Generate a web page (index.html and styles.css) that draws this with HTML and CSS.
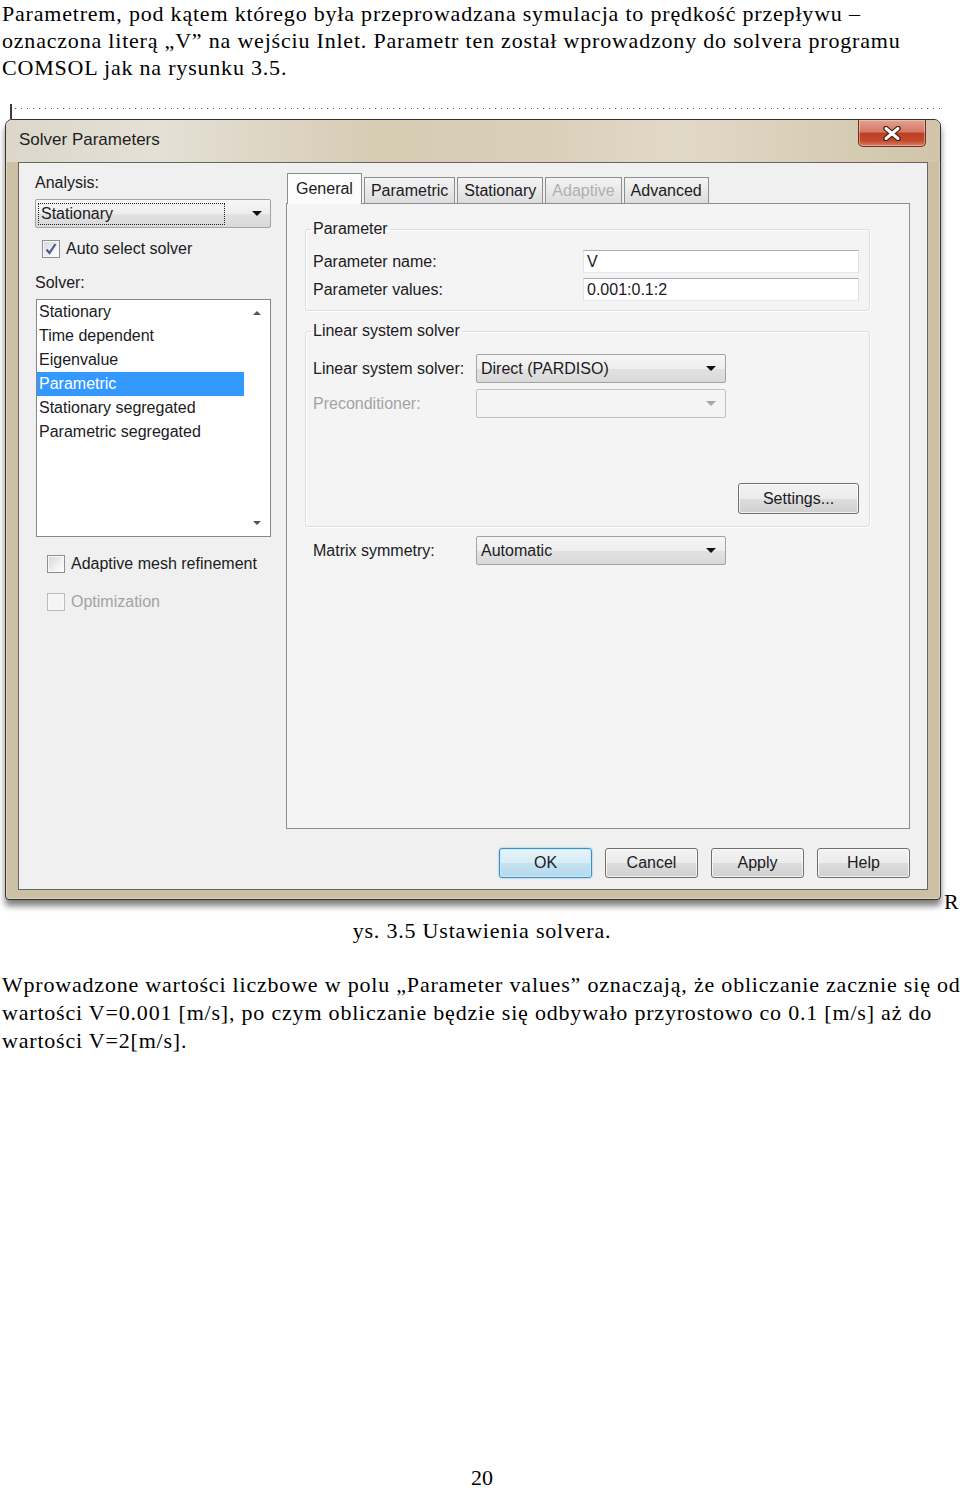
FILE: index.html
```html
<!DOCTYPE html>
<html lang="pl">
<head>
    <meta charset="UTF-8">
    <meta name="viewport" content="width=device-width, initial-scale=1.0">
    <title>Rys. 3.5 Ustawienia solvera</title>
    <link rel="stylesheet" href="styles.css">
</head>
<body>
<div class="page">
    <p class="text">Parametrem, pod kątem którego była przeprowadzana symulacja to prędkość przepływu –<br>oznaczona literą „V” na wejściu Inlet. Parametr ten został wprowadzony do solvera programu<br>COMSOL jak na rysunku 3.5.</p>

    <div class="figure">
        <div class="shot">
            <div class="shot-edge"></div>
            <div class="window">
                <div class="titlebar">
                    <span class="title">Solver Parameters</span>
                    <button class="close" type="button">
                        <svg width="22" height="15" viewBox="0 0 22 15">
                            <path d="M5 2.5 L17 12.5 M17 2.5 L5 12.5" stroke="#4b1d15" stroke-width="5.5" stroke-linecap="round"/>
                            <path d="M5 2.5 L17 12.5 M17 2.5 L5 12.5" stroke="#ffffff" stroke-width="3" stroke-linecap="round"/>
                        </svg>
                    </button>
                </div>

                <div class="client">
                    <div class="left">
                        <div class="label">Analysis:</div>
                        <div class="combo analysis">
                            <span class="focus-rect">Stationary</span>
                            <span class="arrow"></span>
                        </div>
                        <div class="check auto">
                            <span class="box">
                                <svg width="16" height="16" viewBox="0 0 16 16"><path d="M3.5 8.5 L6.5 12 L12.5 3" fill="none" stroke="#4a5a96" stroke-width="2.2"/></svg>
                            </span>
                            Auto select solver
                        </div>
                        <div class="label solver-label">Solver:</div>
                        <div class="listbox">
                            <ul class="items">
                                <li>Stationary</li>
                                <li>Time dependent</li>
                                <li>Eigenvalue</li>
                                <li class="selected">Parametric</li>
                                <li>Stationary segregated</li>
                                <li>Parametric segregated</li>
                            </ul>
                            <div class="scroll">
                                <span class="scroll-up"></span>
                                <span class="scroll-down"></span>
                            </div>
                        </div>
                        <div class="check adaptive">
                            <span class="box"></span>
                            Adaptive mesh refinement
                        </div>
                        <div class="check optimization disabled">
                            <span class="box"></span>
                            Optimization
                        </div>
                    </div>

                    <div class="right">
                        <div class="tabs">
                            <div class="tab active">General</div>
                            <div class="tab">Parametric</div>
                            <div class="tab">Stationary</div>
                            <div class="tab disabled">Adaptive</div>
                            <div class="tab">Advanced</div>
                        </div>
                        <div class="panel">
                            <fieldset class="group params">
                                <legend>Parameter</legend>
                                <div class="field">
                                    <span>Parameter name:</span>
                                    <div class="input">V</div>
                                </div>
                                <div class="field">
                                    <span>Parameter values:</span>
                                    <div class="input">0.001:0.1:2</div>
                                </div>
                            </fieldset>

                            <fieldset class="group linear">
                                <legend>Linear system solver</legend>
                                <div class="field">
                                    <span>Linear system solver:</span>
                                    <div class="combo"><span class="combo-text">Direct (PARDISO)</span><span class="arrow"></span></div>
                                </div>
                                <div class="field disabled">
                                    <span>Preconditioner:</span>
                                    <div class="combo"><span class="combo-text"></span><span class="arrow"></span></div>
                                </div>
                                <div class="settings-row">
                                    <button class="btn settings" type="button">Settings...</button>
                                </div>
                            </fieldset>

                            <div class="field symmetry">
                                <span>Matrix symmetry:</span>
                                <div class="combo"><span class="combo-text">Automatic</span><span class="arrow"></span></div>
                            </div>
                        </div>
                    </div>

                    <div class="buttons">
                        <button class="btn default" type="button">OK</button>
                        <button class="btn" type="button">Cancel</button>
                        <button class="btn" type="button">Apply</button>
                        <button class="btn" type="button">Help</button>
                    </div>
                </div>
            </div>
        </div>
        <span class="fig-r">R</span>
    </div>
    <p class="caption">ys. 3.5 Ustawienia solvera.</p>

    <p class="text para2">Wprowadzone wartości liczbowe w polu „Parameter values” oznaczają, że obliczanie zacznie się od<br>wartości V=0.001 [m/s], po czym obliczanie będzie się odbywało przyrostowo co 0.1 [m/s] aż do<br>wartości V=2[m/s].</p>

    <div class="page-num">20</div>
</div>
</body>
</html>
```

FILE: styles.css
```css
body {
    margin: 0;
    background-color: white;
    color: black;
    font-family: "Liberation Serif", "Times New Roman", serif;
    font-size: 22px;
}
.page {
    min-height: 1488px;
    display: flex;
    flex-direction: column;
}
.text {
    margin: 0;
    padding-left: 2px;
    line-height: 27px;
    letter-spacing: 0.8px;
    white-space: nowrap;
}
.para2 {
    margin-top: 26px;
    line-height: 28px;
}
.caption {
    margin: 7px 0 0;
    padding-left: 4px;
    text-align: center;
    line-height: 28px;
    letter-spacing: 0.8px;
}
.page-num {
    margin-top: auto;
    padding-left: 4px;
    text-align: center;
    line-height: 21px;
}

/* screenshot of the dialog */
.figure {
    display: flex;
    align-items: flex-end;
    margin-top: 23px;
}
.fig-r {
    margin-left: 3px;
    line-height: 16px;
}
.shot {
    width: 936px;
    margin-left: 5px;
    padding-bottom: 10px;
}
.shot-edge {
    height: 15px;
    margin: 0 1px 0 5px;
    border-left: 2px solid #3a3a3a;
    background-image: linear-gradient(to right, #555 1px, transparent 1px);
    background-size: 6px 1px;
    background-position: 3px 4px;
    background-repeat: repeat-x;
}
.window {
    border: 1px solid #333;
    border-radius: 7px 7px 4px 4px;
    background-color: #cbc0a4;
    padding: 0 12px 9px;
    box-shadow: 0 6px 6px rgba(0,0,0,0.5), inset 0 0 0 1px rgba(255,255,255,0.35);
    font-family: "Liberation Sans", Arial, sans-serif;
    font-size: 16px;
    color: #201a22;
}
.titlebar {
    display: flex;
    justify-content: space-between;
    align-items: flex-start;
    height: 42px;
    margin: 0 -12px;
    padding: 0 14px 0 13px;
    border-radius: 6px 6px 0 0;
    background: linear-gradient(to right, #dcd7ca, #e5e0d6 16%, #d6ccb4 40%, #dad0ba 58%, #e1d9c7 72%, #d0c5aa 100%);
}
.title {
    padding-top: 10px;
    line-height: 20px;
    font-size: 17px;
    color: #1e1e1e;
}
.close {
    display: flex;
    align-items: center;
    justify-content: center;
    width: 68px;
    height: 27px;
    padding: 0;
    border: 1px solid #6b2f25;
    border-top: none;
    border-radius: 0 0 5px 5px;
    background: linear-gradient(#e3a190, #d57a66 45%, #bd3f24 52%, #c44a2e 80%, #dc7d63);
    box-shadow: inset 0 0 0 1px rgba(255,220,210,0.45);
}

.client {
    display: grid;
    grid-template-columns: 236px 624px;
    column-gap: 15px;
    padding: 10px 17px 11px 16px;
    border: 1px solid #666;
    background-color: #f0f0f0;
}

/* left column */
.left {
    display: flex;
    flex-direction: column;
    align-items: flex-start;
}
.label {
    line-height: 20px;
}
.solver-label {
    margin-top: 14px;
}
.combo {
    display: flex;
    align-items: center;
    box-sizing: border-box;
    height: 29px;
    border: 1px solid #a3a3a3;
    border-radius: 2px;
    background: linear-gradient(#f6f6f6, #eeeeee 50%, #e2e2e2 51%, #d9d9d9);
}
.combo.analysis {
    width: 236px;
    margin-top: 6px;
}
.focus-rect {
    flex: 1;
    margin: 2px 27px 2px 2px;
    padding-left: 2px;
    border: 1px dotted #222;
    line-height: 20px;
}
.combo-text {
    flex: 1;
    padding-left: 4px;
    line-height: 20px;
}
.arrow {
    width: 0;
    height: 0;
    margin-right: 8px;
    border-left: 5px solid transparent;
    border-right: 5px solid transparent;
    border-top: 5px solid #111;
}
.check {
    display: flex;
    align-items: center;
    gap: 6px;
    line-height: 20px;
}
.check.auto {
    margin: 11px 0 0 7px;
}
.check.adaptive {
    margin: 17px 0 0 12px;
}
.check.optimization {
    margin: 18px 0 0 12px;
}
.box {
    display: flex;
    align-items: center;
    justify-content: center;
    box-sizing: border-box;
    width: 18px;
    height: 18px;
    border: 1px solid #8e8f8f;
    background: linear-gradient(135deg, #d4d6db, #f6f6f6 70%, #ffffff);
    box-shadow: inset 0 0 0 1px #f7f7f7;
}
.disabled {
    color: #a3a3a3;
}
.check.disabled .box {
    border-color: #bcbcbc;
    background: #f4f4f4;
}
.listbox {
    display: flex;
    box-sizing: border-box;
    width: 235px;
    height: 238px;
    margin: 6px 0 0 1px;
    border: 1px solid #828790;
    background-color: white;
}
.items {
    flex: 1;
    margin: 0;
    padding: 0;
    list-style: none;
}
.items li {
    height: 24px;
    padding-left: 2px;
    line-height: 24px;
}
.items li.selected {
    background-color: #3399ff;
    color: white;
}
.scroll {
    display: flex;
    flex-direction: column;
    justify-content: space-between;
    align-items: center;
    width: 26px;
    padding: 11px 0;
}
.scroll-up, .scroll-down {
    width: 0;
    height: 0;
    border-left: 4px solid transparent;
    border-right: 4px solid transparent;
}
.scroll-up {
    border-bottom: 4px solid #555;
}
.scroll-down {
    border-top: 4px solid #555;
}

/* tabs */
.tabs {
    display: flex;
    align-items: flex-end;
    gap: 2px;
    height: 30px;
    padding-left: 1px;
}
.tab {
    box-sizing: border-box;
    height: 26px;
    padding: 0 6px;
    border: 1px solid #8c8e94;
    border-bottom: none;
    background: linear-gradient(#f4f4f4, #e9e9e9 50%, #dcdcdc);
    line-height: 25px;
}
.tab.active {
    position: relative;
    z-index: 1;
    height: 31px;
    margin-bottom: -1px;
    padding: 0 8px;
    background: #fcfcfc;
    line-height: 29px;
}
.tab.disabled {
    color: #b0b0b0;
}
.panel {
    box-sizing: border-box;
    height: 626px;
    border: 1px solid #8c8e94;
    background-color: #f4f4f4;
}
.group {
    box-sizing: border-box;
    width: 565px;
    min-width: 0;
    margin: 15px 0 0 18px;
    padding: 11px 9px 9px 7px;
    border: 1px solid #d5dfe5;
    border-radius: 3px;
    box-shadow: inset 1px 1px 0 #fff, 1px 1px 0 #fff;
}
.group legend {
    margin-left: -2px;
    padding: 0 2px;
    line-height: 20px;
}
.field {
    display: grid;
    grid-template-columns: 270px 276px;
    align-items: center;
}
.params .field + .field {
    margin-top: 5px;
}
.input {
    box-sizing: border-box;
    height: 23px;
    padding-left: 3px;
    border: 1px solid #abadb3;
    border-color: #abadb3 #dbdfe6 #e3e9ef #e2e3ea;
    background-color: white;
    line-height: 21px;
}
.linear {
    margin-top: 10px;
    padding: 13px 10px 12px 7px;
}
.linear .field, .symmetry {
    grid-template-columns: 163px 250px;
}
.linear .field + .field {
    margin-top: 6px;
}
.field .arrow {
    margin-right: 9px;
}
.field.disabled .combo {
    border-color: #bfc3c6;
    background: #f4f4f4;
}
.field.disabled .arrow {
    border-top-color: #a8a8a8;
}
.settings-row {
    display: flex;
    justify-content: flex-end;
    margin-top: 65px;
}
.symmetry {
    margin: 9px 0 0 26px;
}

/* buttons */
.buttons {
    grid-column: 1 / -1;
    display: flex;
    justify-content: flex-end;
    gap: 13px;
    margin-top: 19px;
}
.btn {
    box-sizing: border-box;
    width: 93px;
    height: 30px;
    padding: 0;
    border: 1px solid #707070;
    border-radius: 3px;
    background: linear-gradient(#f3f3f3, #ebebeb 50%, #dddddd 51%, #d0d0d0);
    box-shadow: inset 0 0 0 1px rgba(255,255,255,0.7);
    font-family: inherit;
    font-size: 16px;
    color: #201a22;
}
.btn.default {
    border-color: #3c8fc4;
    background: linear-gradient(#e6f3fa, #d7ecf7 50%, #c4e2f2 51%, #b6d9ec);
    box-shadow: inset 0 0 0 1px #c8eafb, 0 0 2px #5fb3e0;
}
.btn.settings {
    width: 121px;
    height: 31px;
}
```
